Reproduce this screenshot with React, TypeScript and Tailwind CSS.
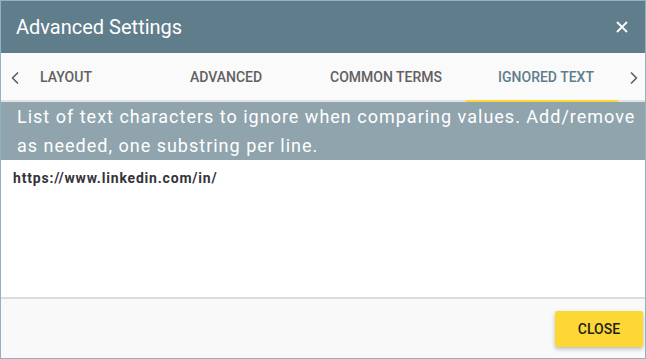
import { ChevronLeft, ChevronRight } from "lucide-react"

const tabs = ["Layout", "Advanced", "Common Terms", "Ignored Text"]
const activeTab = "Ignored Text"

export default function App() {
    return (
        <div className="w-[646px] h-[359px] flex flex-col border border-[#8db3c4] bg-white font-['Roboto','Liberation_Sans',sans-serif] overflow-hidden">
            <div className="h-[52px] shrink-0 flex items-center justify-between bg-[#607d8b] pl-[15px] pr-[11px]">
                <span className="text-white text-[20px]">Advanced Settings</span>
                <button className="w-6 h-6 flex items-center justify-center text-white">
                    <svg width="12" height="12" viewBox="0 0 12 12" fill="none" stroke="currentColor" strokeWidth="1.8">
                        <path d="M1 1 11 11M11 1 1 11" />
                    </svg>
                </button>
            </div>

            <div className="h-[49px] shrink-0 flex bg-[#fafafa] shadow-[inset_0_-2px_0_#e2e2e2]">
                <button className="w-[28px] flex items-center justify-center text-[#5f5f5f]">
                    <ChevronLeft size={20} strokeWidth={2} />
                </button>
                <div className="flex-1 overflow-hidden">
                    <div className="flex h-full ml-[-43px]">
                        {tabs.map((tab) => (
                            <div
                                key={tab}
                                className={
                                    "w-[160px] shrink-0 flex items-center justify-center uppercase text-[14px] font-medium border-b-2 pt-[2px] " +
                                    (tab === activeTab ? "border-[#fdd835] text-[#607d8b]" : "border-transparent text-[#616161]")
                                }
                            >
                                {tab}
                            </div>
                        ))}
                    </div>
                </div>
                <button className="w-[27px] flex items-center justify-center pl-[5px] text-[#5f5f5f]">
                    <ChevronRight size={20} strokeWidth={2} />
                </button>
            </div>

            <div className="h-[58px] shrink-0 bg-[#90a4ae] pl-4 pr-2 text-white text-[18px] leading-[29px] tracking-[1px]">
                List of text characters to ignore when comparing values. Add/remove as needed, one substring per line.
            </div>

            <div className="flex-1 px-3 pt-2 text-[14px] leading-[20px] font-bold tracking-[0.8px] text-[#34343c]">
                https://www.linkedin.com/in/
            </div>

            <div className="h-[61px] shrink-0 border-t-2 border-[#dcdcdc] bg-[#f9f9f9] flex justify-end items-start pt-3 pr-[2px]">
                <button className="w-[88px] h-9 rounded-[2px] bg-[#fdd835] text-[#212121] text-[14px] font-medium shadow-[0_2px_4px_rgba(0,0,0,0.25)]">
                    CLOSE
                </button>
            </div>
        </div>
    )
}
